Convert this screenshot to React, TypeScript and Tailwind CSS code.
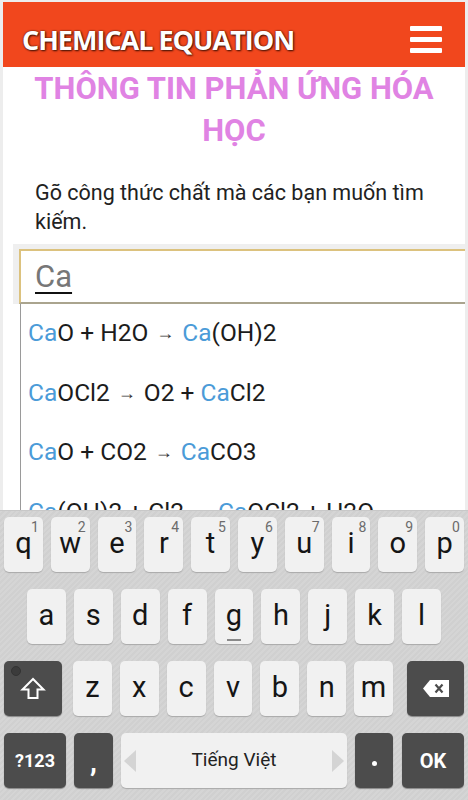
import React from "react";

const Hint = ({ n }: { n: string }) => (
  <span className="absolute top-[3px] right-[4px] text-[14px] leading-none text-[#6b6b6b]">{n}</span>
);

const LightKey = ({ ch, hint, extra }: { ch: string; hint?: string; extra?: React.ReactNode }) => (
  <div className="relative flex-1 h-full rounded-[5px] bg-[#f1f1f1] shadow-[0_1px_1px_#a9a9a9] flex items-center justify-center text-[29px] text-[#151515]">
    {hint && <Hint n={hint} />}
    <span className="leading-none -mt-[3px]">{ch}</span>
    {extra}
  </div>
);

const Arrow = () => <span className="text-[18px] text-[#333] mx-[8px] relative top-[-2px]">→</span>;
const B = ({ t }: { t: string }) => <span className="text-[#4b9bd8]">{t}</span>;

export default function App() {
  const row1 = ["q", "w", "e", "r", "t", "y", "u", "i", "o", "p"];
  const hints = ["1", "2", "3", "4", "5", "6", "7", "8", "9", "0"];
  const row2 = ["a", "s", "d", "f", "g", "h", "j", "k", "l"];
  const row3 = ["z", "x", "c", "v", "b", "n", "m"];
  return (
    <div className="w-[468px] h-[800px] overflow-hidden flex flex-col bg-[#ededed] font-['Roboto','Liberation_Sans',sans-serif]">
      <div className="h-[510px] shrink-0 flex flex-col px-[3px] pt-[2px] overflow-hidden">
        <div className="h-[65px] shrink-0 bg-[#f1471d] flex items-center justify-between pl-[19px] pr-[23px] pt-[9px]">
          <span className="font-['Open_Sans',sans-serif] font-bold text-[27px] tracking-[-1px] text-white leading-none [text-shadow:0_0_2px_rgba(40,10,0,0.9),1px_1px_2px_rgba(40,10,0,0.8)]">
            CHEMICAL EQUATION
          </span>
          <div className="flex flex-col gap-[6px] w-[32px]">
            <div className="h-[5px] bg-white rounded-[1px]" />
            <div className="h-[5px] bg-white rounded-[1px]" />
            <div className="h-[5px] bg-white rounded-[1px]" />
          </div>
        </div>
        <div className="flex-1 bg-white flex flex-col">
          <div className="mt-[1px] text-center font-bold text-[31px] leading-[42px] text-[#e083e3]">
            THÔNG TIN PHẢN ỨNG HÓA
            <br />
            HỌC
          </div>
          <p className="mt-[26px] px-[32px] text-[21.5px] leading-[29px] text-[#222]">
            Gõ công thức chất mà các bạn muốn tìm kiếm.
          </p>
          <div className="mt-[8px] ml-[10px] bg-[#efefef] pl-[6px] pt-[5px]">
            <div className="h-[55px] border-2 border-[#dcc27e] border-b-[#aaa48e] border-r-0 bg-white flex items-center pl-[14px]">
              <span className="text-[31px] text-[#777] leading-none underline decoration-[#111] decoration-[1.5px] underline-offset-[5px]">Ca</span>
            </div>
          </div>
          <div className="ml-[17px] border-l border-[#9a9a9a] pl-[7px] text-[24.5px] text-[#1c1c1c] flex flex-col">
            <div className="h-[59.5px] flex items-center">
              <span>
                <B t="Ca" />O + H2O<Arrow /><B t="Ca" />(OH)2
              </span>
            </div>
            <div className="h-[59.5px] flex items-center">
              <span>
                <B t="Ca" />OCl2<Arrow />O2 + <B t="Ca" />Cl2
              </span>
            </div>
            <div className="h-[59.5px] flex items-center">
              <span>
                <B t="Ca" />O + CO2<Arrow /><B t="Ca" />CO3
              </span>
            </div>
            <div className="h-[59.5px] flex items-center">
              <span>
                <B t="Ca" />(OH)2 + Cl2<Arrow /><B t="Ca" />OCl2 + H2O
              </span>
            </div>
          </div>
        </div>
      </div>
      <div className="flex-1 border-t border-[#c8c8c8] bg-[repeating-linear-gradient(135deg,#d5d5d5_0px,#d5d5d5_2px,#d0d0d0_2px,#d0d0d0_4px)] pt-[6px] flex flex-col gap-[17px]">
        <div className="h-[55px] px-[4px] flex gap-[8px]">
          {row1.map((c, i) => (
            <LightKey key={c} ch={c} hint={hints[i]} />
          ))}
        </div>
        <div className="h-[55px] px-[27px] flex gap-[8px]">
          {row2.map((c) => (
            <LightKey
              key={c}
              ch={c}
              extra={c === "g" ? <span className="absolute bottom-[3px] left-[12px] w-[14px] h-[2px] bg-[#8a8a8a]" /> : undefined}
            />
          ))}
        </div>
        <div className="h-[55px] px-[4px] flex gap-[8px]">
          <div className="relative w-[58px] mr-[3px] h-full rounded-[5px] bg-[#4c4c4c] shadow-[0_1px_1px_#888] flex items-center justify-center">
            <span className="absolute top-[5px] left-[7px] w-[10px] h-[10px] rounded-full bg-[#3b3b3b] border border-[#333]" />
            <svg width="26" height="24" viewBox="0 0 26 24">
              <path d="M13 2 L2.5 12.5 H8.5 V21 H17.5 V12.5 H23.5 Z" fill="none" stroke="white" strokeWidth="2" strokeLinejoin="miter" />
            </svg>
          </div>
          {row3.map((c) => (
            <LightKey key={c} ch={c} />
          ))}
          <div className="w-[57px] ml-[6px] h-full rounded-[5px] bg-[#4c4c4c] shadow-[0_1px_1px_#888] flex items-center justify-center">
            <svg width="26" height="17" viewBox="0 0 26 17">
              <path d="M7 0 H26 V17 H7 L0 8.5 Z" fill="white" />
              <path d="M12.5 4.5 L19.5 12.5 M19.5 4.5 L12.5 12.5" stroke="#4c4c4c" strokeWidth="2.2" />
            </svg>
          </div>
        </div>
        <div className="h-[55px] pl-[4px] pr-[4px] flex">
          <div className="w-[62px] h-full rounded-[5px] bg-[#4c4c4c] shadow-[0_1px_1px_#888] flex items-center justify-center text-white font-bold text-[18px]">
            ?123
          </div>
          <div className="w-[39px] ml-[8px] h-full rounded-[5px] bg-[#4c4c4c] shadow-[0_1px_1px_#888] flex items-center justify-center text-white font-bold text-[28px]">
            <span className="mt-[2px]">,</span>
          </div>
          <div className="flex-1 ml-[8px] h-full rounded-[5px] bg-[#f1f1f1] shadow-[0_1px_1px_#a9a9a9] flex items-center justify-between px-[3px]">
            <svg width="12" height="22" viewBox="0 0 12 22">
              <path d="M12 0 V22 L0 11 Z" fill="#d4d4d4" />
            </svg>
            <span className="text-[19px] text-[#222]">Tiếng Việt</span>
            <svg width="12" height="22" viewBox="0 0 12 22">
              <path d="M0 0 V22 L12 11 Z" fill="#d4d4d4" />
            </svg>
          </div>
          <div className="w-[38px] ml-[8px] h-full rounded-[5px] bg-[#4c4c4c] shadow-[0_1px_1px_#888] flex items-center justify-center">
            <span className="w-[5px] h-[5px] rounded-full bg-white mt-[6px]" />
          </div>
          <div className="w-[62px] ml-[9px] h-full rounded-[5px] bg-[#4c4c4c] shadow-[0_1px_1px_#888] flex items-center justify-center text-white font-bold text-[20px]">
            OK
          </div>
        </div>
      </div>
    </div>
  );
}
